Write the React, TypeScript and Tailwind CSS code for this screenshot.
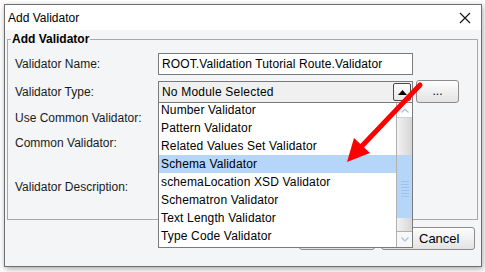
import React from "react";

const items = [
  "Number Validator",
  "Pattern Validator",
  "Related Values Set Validator",
  "Schema Validator",
  "schemaLocation XSD Validator",
  "Schematron Validator",
  "Text Length Validator",
  "Type Code Validator",
];

const font = { fontFamily: '"Liberation Sans", Arial, sans-serif' };

function Label({ children }: { children: React.ReactNode }) {
  return <div className="w-[143px] shrink-0 text-[12px] text-[#1a1a1a]">{children}</div>;
}

export default function App() {
  return (
    <div className="relative w-[485px] h-[272px] bg-white overflow-hidden pl-[4px] pt-[4px]" style={font}>
      <div className="relative w-[478px] h-[263px] border border-[#6e6e6e] bg-[#f4f5f7] flex flex-col shadow-[1px_2px_6px_rgba(0,0,0,0.35)]">
        {/* title bar */}
        <div className="h-[25px] bg-white flex items-center justify-between pl-[3px] pr-[10px] shrink-0">
          <span className="text-[12px] text-black leading-none">Add Validator</span>
          <svg width="12" height="12" viewBox="0 0 12 12">
            <path d="M1 1 L11 11 M11 1 L1 11" stroke="#111" strokeWidth="1.1" fill="none" />
          </svg>
        </div>
        {/* body */}
        <div className="flex-1 flex flex-col">
          <fieldset className="ml-[2px] mr-[3px] mt-[2px] h-[188px] border border-[#a9a9a9] pl-[7px] pr-[2px]">
            <legend className="ml-[-4px] px-[1px] text-[12px] font-bold leading-[15px] text-black">Add Validator</legend>
            <div className="flex items-center h-[22px] mt-[6px]">
              <Label>Validator Name:</Label>
              <div className="w-[255px] h-[22px] border border-[#7a7a7a] bg-white flex items-center pl-[3px] text-[12px] tracking-[0.1px] text-black">
                ROOT.Validation Tutorial Route.Validator
              </div>
            </div>
            <div className="flex items-end h-[23px] mt-[5px]">
              <div className="self-center mt-[1px]">
                <Label>Validator Type:</Label>
              </div>
              <div className="w-[255px] h-[22px] border border-[#7a7a7a] bg-[#f0f0f0] flex items-center justify-between pl-[3px] text-[12px] tracking-[0.2px] text-black">
                <span>No Module Selected</span>
                <div className="w-[18px] h-[18px] mr-[1px] rounded-[2px] border border-[#4a4a4a] bg-gradient-to-b from-white to-[#e6e6e6] flex items-center justify-center">
                  <svg width="9" height="5" viewBox="0 0 9 5">
                    <path d="M0 5 L4.5 0 L9 5 Z" fill="#000" />
                  </svg>
                </div>
              </div>
              <div className="ml-[3px] w-[43px] h-[23px] rounded-[3px] border border-[#8c8c8c] bg-gradient-to-b from-[#fdfdfd] to-[#e3e3e3] flex items-end justify-center pb-[5px] text-[12px] leading-none text-black">
                ...
              </div>
            </div>
            <div className="flex items-center h-[22px] mt-[4px]">
              <Label>Use Common Validator:</Label>
            </div>
            <div className="flex items-center h-[22px] mt-[3px]">
              <Label>Common Validator:</Label>
            </div>
            <div className="flex items-center h-[22px] mt-[22px]">
              <Label>Validator Description:</Label>
            </div>
          </fieldset>
          <div className="flex justify-end gap-[6px] pr-[6px] mt-[7px]">
            <div className="w-[76px] h-[23px] rounded-[3px] border border-[#8c8c8c] bg-gradient-to-b from-[#fdfdfd] to-[#e3e3e3] flex items-center justify-center text-[12px] text-black">
              OK
            </div>
            <div className="w-[94px] h-[23px] rounded-[3px] border border-[#8c8c8c] bg-gradient-to-b from-[#fdfdfd] to-[#e3e3e3] flex items-center pl-[37px] text-[13px] text-black">
              Cancel
            </div>
          </div>
        </div>

        {/* dropdown list overlay */}
        <div className="absolute left-[153px] top-[98px] w-[255px] h-[145px] border-x border-b border-[#7a7a7a] bg-white flex overflow-hidden">
          <div className="flex-1 flex flex-col mt-[-2px]">
            {items.map((it) => (
              <div
                key={it}
                className={
                  "h-[18px] shrink-0 leading-[18px] pl-[2px] text-[12px] tracking-[0.15px] text-black whitespace-nowrap " +
                  (it === "Schema Validator" ? "bg-[#b5d5f9]" : "")
                }
              >
                {it}
              </div>
            ))}
          </div>
          <div className="w-[16px] shrink-0 border-l border-[#b0b0b0] flex flex-col">
            <div className="h-[15px] bg-white border-b border-[#d0d0d0] flex items-center justify-center">
              <svg width="8" height="5" viewBox="0 0 8 5">
                <path d="M0.5 4.5 L4 1 L7.5 4.5" stroke="#9cc0ec" strokeWidth="1.2" fill="none" />
              </svg>
            </div>
            <div className="h-[37px] bg-gradient-to-r from-[#f2f2f2] to-[#d6d6d6]" />
            <div className="h-[63px] bg-[#b5d5f9] flex flex-col items-center justify-center gap-[2px] pt-[5px]">
              {[0, 1, 2, 3, 4, 5].map((i) => (
                <div key={i} className="w-[8px] h-[1px] bg-[#9ec2ec]" />
              ))}
            </div>
            <div className="h-[13px] bg-gradient-to-r from-[#f2f2f2] to-[#d6d6d6]" />
            <div className="flex-1 bg-[#f7f7f7] border-t border-[#b0b0b0] flex items-center justify-center">
              <svg width="8" height="5" viewBox="0 0 8 5">
                <path d="M0.5 0.5 L4 4 L7.5 0.5" stroke="#9cc0ec" strokeWidth="1.2" fill="none" />
              </svg>
            </div>
          </div>
        </div>
      </div>

      {/* red annotation arrow */}
      <svg className="absolute left-0 top-0 pointer-events-none" width="485" height="272" viewBox="0 0 485 272">
        <line x1="420" y1="85" x2="360" y2="148" stroke="#ff0000" strokeWidth="5" strokeLinecap="round" />
        <polygon points="347,162 354,138 370,153" fill="#ff0000" />
      </svg>
    </div>
  );
}
